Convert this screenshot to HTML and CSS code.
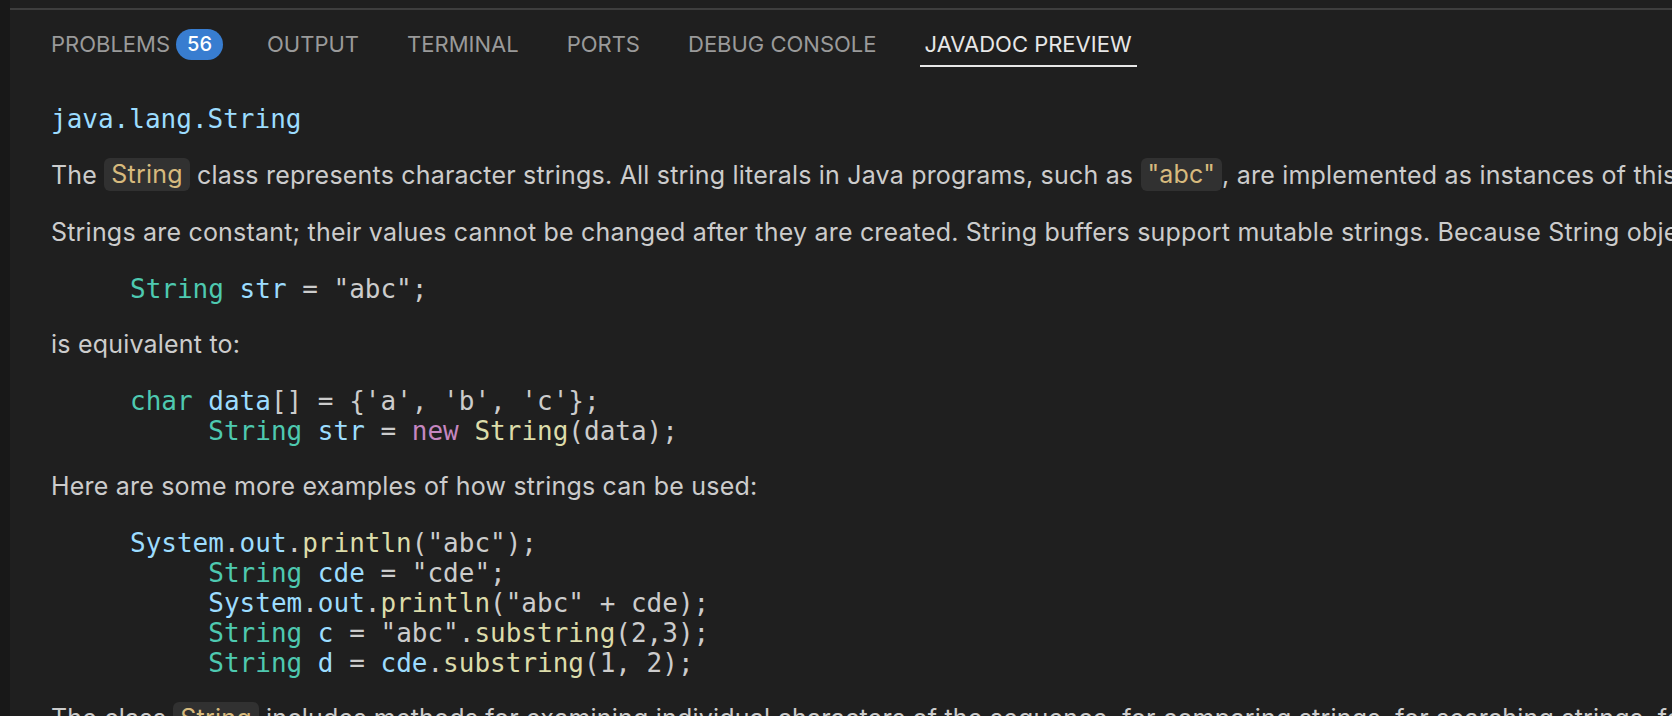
FILE: index.html
```html
<!DOCTYPE html>
<html lang="en">
<head>
<meta charset="utf-8">
<title>Javadoc Preview</title>
<link rel="stylesheet" href="styles.css">
</head>
<body>
<div class="app">
  <div class="rail"></div>
  <div class="panel">
    <div class="tabs">
      <div class="tab with-badge"><span class="label">PROBLEMS</span><span class="badge">56</span></div>
      <div class="tab"><span class="label">OUTPUT</span></div>
      <div class="tab"><span class="label">TERMINAL</span></div>
      <div class="tab"><span class="label">PORTS</span></div>
      <div class="tab"><span class="label">DEBUG CONSOLE</span></div>
      <div class="tab active"><span class="label">JAVADOC PREVIEW</span></div>
    </div>
    <div class="doc">
      <div class="sig">java.lang.String</div>
      <p>The <code>String</code> class represents character strings. All string literals in Java programs, such as <code>"abc"</code>, are implemented as instances of this class.</p>
      <p>Strings are constant; their values cannot be changed after they are created. String buffers support mutable strings. Because String objects are immutable they can be shared. For example:</p>
      <pre><span class="t">String</span> <span class="v">str</span> = "abc";</pre>
      <p>is equivalent to:</p>
      <pre><span class="t">char</span> <span class="v">data</span>[] = {'a', 'b', 'c'};
     <span class="t">String</span> <span class="v">str</span> = <span class="k">new</span> <span class="f">String</span>(data);</pre>
      <p>Here are some more examples of how strings can be used:</p>
      <pre><span class="v">System</span>.<span class="v">out</span>.<span class="f">println</span>("abc");
     <span class="t">String</span> <span class="v">cde</span> = "cde";
     <span class="v">System</span>.<span class="v">out</span>.<span class="f">println</span>("abc" + cde);
     <span class="t">String</span> <span class="v">c</span> = "abc".<span class="f">substring</span>(2,3);
     <span class="t">String</span> <span class="v">d</span> = <span class="v">cde</span>.<span class="f">substring</span>(1, 2);</pre>
      <p>The class <code>String</code> includes methods for examining individual characters of the sequence, for comparing strings, for searching strings, for extracting substrings, and for creating a copy of a string with all characters translated to uppercase or to lowercase.</p>
    </div>
  </div>
</div>
</body>
</html>
```

FILE: styles.css
```css
html, body {
  margin: 0;
  padding: 0;
  height: 716px;
  overflow: hidden;
  background: #1f1f1f;
}

.app {
  display: flex;
  height: 716px;
  font-family: Inter, "Noto Sans", sans-serif;
}

.rail {
  width: 10px;
  flex: none;
  background: #181818;
}

.panel {
  flex: 1;
  min-width: 0;
  margin-top: 8px;
  border-top: 2px solid #3e3e3e;
  overflow: hidden;
}

.tabs {
  display: flex;
  gap: 38px;
  padding-left: 36px;
  padding-top: 13px;
}

.tab {
  display: flex;
  align-items: center;
  gap: 10px;
  height: 42px;
  padding: 0 5px;
  border-bottom: 2px solid transparent;
  color: #9a9a9a;
  font-size: 22px;
  line-height: 26px;
  white-space: nowrap;
}

.tab.with-badge {
  gap: 6px;
  padding-right: 1px;
}

.tab.active {
  color: #e7e7e7;
  border-bottom-color: #e7e7e7;
}

.badge {
  display: inline-flex;
  align-items: center;
  justify-content: center;
  height: 31px;
  padding: 0 11px;
  border-radius: 16px;
  background: #387dd0;
  color: #ffffff;
  font-size: 20px;
  font-weight: 500;
}

.doc {
  padding: 37px 0 0 41px;
  color: #cccccc;
  white-space: nowrap;
}

.sig {
  font-family: "DejaVu Sans Mono", "Liberation Mono", monospace;
  font-size: 26px;
  line-height: 30px;
  color: #9cdcfe;
  margin-bottom: 24px;
}

p {
  margin: 24.5px 0;
  font-size: 25px;
  line-height: 33px;
  letter-spacing: 0.2px;
}

code {
  font-family: Inter, "Noto Sans", sans-serif;
  font-size: 25px;
  color: #d7ba7d;
  background: #313131;
  border-radius: 6px;
  padding: 1.4px 7px;
}

pre {
  margin: 24.5px 0 24.5px 79px;
  font-family: "DejaVu Sans Mono", "Liberation Mono", monospace;
  font-size: 26px;
  line-height: 30px;
  color: #cccccc;
}

.t { color: #4ec9b0; }
.v { color: #9cdcfe; }
.f { color: #dcdcaa; }
.k { color: #c586c0; }
```
